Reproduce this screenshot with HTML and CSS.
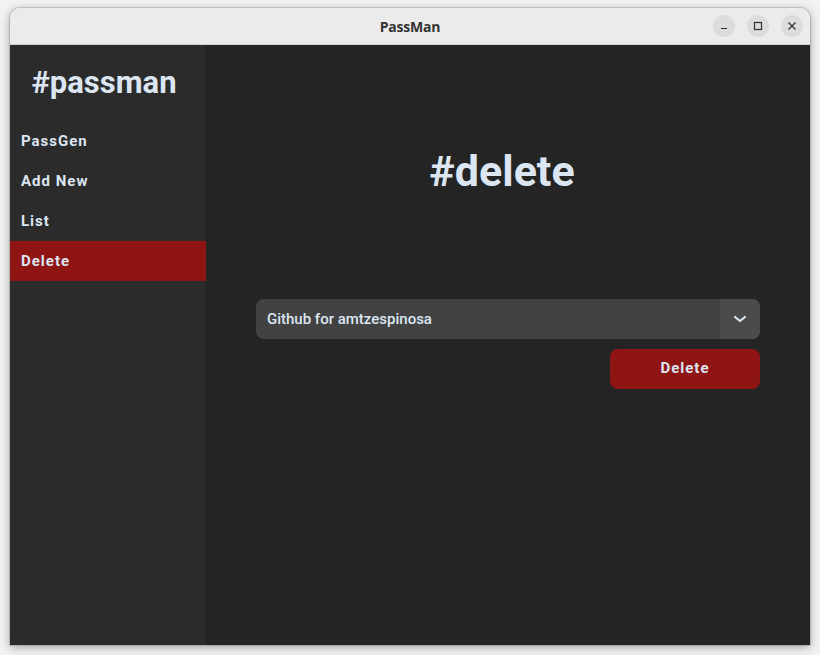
FILE: index.html
```html
<!DOCTYPE html>
<html>
<head>
<meta charset="utf-8">
<link rel="stylesheet" href="styles.css">
</head>
<body>
<div class="window">
  <div class="titlebar">
    <span class="title">PassMan</span>
    <div class="controls">
      <span class="ctl"><svg width="10" height="10" viewBox="0 0 10 10"><path d="M2 7.5h6" stroke="#2e2e2e" stroke-width="1.2"/></svg></span>
      <span class="ctl"><svg width="10" height="10" viewBox="0 0 10 10"><rect x="1.5" y="1.5" width="7" height="7" fill="none" stroke="#2e2e2e" stroke-width="1.2"/></svg></span>
      <span class="ctl"><svg width="10" height="10" viewBox="0 0 10 10"><path d="M1.5 1.5l7 7M8.5 1.5l-7 7" stroke="#2e2e2e" stroke-width="1.2"/></svg></span>
    </div>
  </div>
  <div class="app">
    <nav class="sidebar">
      <div class="brand">#passman</div>
      <a class="nav-item">PassGen</a>
      <a class="nav-item">Add New</a>
      <a class="nav-item">List</a>
      <a class="nav-item active">Delete</a>
    </nav>
    <main class="main">
      <h1 class="heading">#delete</h1>
      <div class="form">
        <div class="select">
          <span class="select-text">Github for amtzespinosa</span>
          <span class="select-btn"><svg width="14" height="10" viewBox="0 0 14 10"><path d="M2 3l5 4 5-4" fill="none" stroke="#dce6f2" stroke-width="2.2" stroke-linecap="round" stroke-linejoin="round"/></svg></span>
        </div>
        <div class="actions">
          <button class="btn-delete">Delete</button>
        </div>
      </div>
    </main>
  </div>
</div>
</body>
</html>
```
FILE: styles.css
```css
html, body {
  margin: 0;
  padding: 0;
}
body {
  width: 820px;
  height: 655px;
  background: #f2f2f2;
  overflow: hidden;
  font-family: Roboto, "Liberation Sans", sans-serif;
}
.window {
  margin: 8px 0 0 10px;
  width: 800px;
  height: 637px;
  display: flex;
  flex-direction: column;
  border-radius: 10px 10px 0 0;
  box-shadow: 0 2px 10px rgba(0,0,0,0.35), 0 0 0 1px rgba(0,0,0,0.12);
  overflow: hidden;
}
.titlebar {
  height: 36px;
  flex: none;
  background: #ebebeb;
  border-bottom: 1px solid #d0d0d0;
  display: flex;
  align-items: center;
  justify-content: center;
  position: relative;
}
.title {
  font-family: "Open Sans", "DejaVu Sans", sans-serif;
  font-weight: 700;
  font-size: 14px;
  color: #333;
  letter-spacing: -0.2px;
}
.controls {
  position: absolute;
  right: 7px;
  top: 7px;
  display: flex;
  gap: 12px;
}
.ctl {
  width: 22px;
  height: 22px;
  border-radius: 50%;
  background: #dcdcdc;
  display: flex;
  align-items: center;
  justify-content: center;
}
.app {
  flex: 1;
  display: flex;
}
.sidebar {
  width: 196px;
  flex: none;
  background: #2b2b2b;
  display: flex;
  flex-direction: column;
}
.brand {
  text-align: center;
  font-weight: 700;
  font-size: 31px;
  color: #dce6f2;
  padding: 19px 8px 20px 0;
  line-height: 37px;
}
.nav-item {
  display: block;
  height: 40px;
  line-height: 40px;
  padding-left: 11px;
  font-size: 15px;
  font-weight: 700;
  letter-spacing: 1px;
  color: #dce6f2;
}
.nav-item.active {
  background: #8f1414;
}
.main {
  flex: 1;
  background: #242424;
  padding: 0 50px;
  display: flex;
  flex-direction: column;
}
.heading {
  margin: 101px 0 0;
  text-align: center;
  font-size: 43px;
  font-weight: 700;
  line-height: 50px;
  color: #dce6f2;
  padding-right: 12px;
}
.form {
  margin-top: 103px;
  display: flex;
  flex-direction: column;
  gap: 10px;
}
.select {
  height: 40px;
  background: #424242;
  border-radius: 8px;
  display: flex;
  align-items: center;
  overflow: hidden;
}
.select-text {
  flex: 1;
  padding-left: 11px;
  font-size: 15px;
  font-weight: 500;
  color: #dce6f2;
}
.select-btn {
  width: 40px;
  height: 40px;
  background: #4b4b4b;
  display: flex;
  align-items: center;
  justify-content: center;
}
.actions {
  display: flex;
  justify-content: flex-end;
}
.btn-delete {
  width: 150px;
  height: 40px;
  padding: 0 0 3px;
  border: none;
  border-radius: 8px;
  background: #8f1414;
  color: #dce6f2;
  font-family: Roboto, "Liberation Sans", sans-serif;
  font-size: 15px;
  font-weight: 700;
  letter-spacing: 1px;
}
```
